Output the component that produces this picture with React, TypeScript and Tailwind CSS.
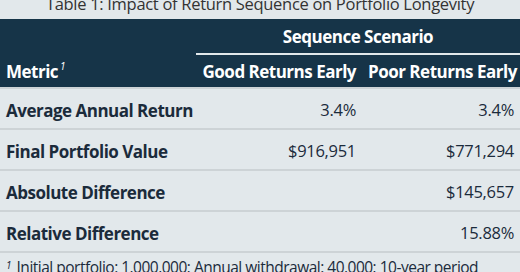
export default function App() {
  const rows = [
    { m: "Average Annual Return", a: "3.4%", b: "3.4%" },
    { m: "Final Portfolio Value", a: "$916,951", b: "$771,294" },
    { m: "Absolute Difference", a: "", b: "$145,657" },
    { m: "Relative Difference", a: "", b: "15.88%" },
  ];
  return (
    <div
      className="w-[520px] h-[272px] overflow-hidden bg-[#e2e8eb] text-[#1b2b3b]"
      style={{ fontFamily: '"Open Sans", "Noto Sans", sans-serif' }}
    >
      <div className="h-[19px] relative">
        <div className="absolute left-0 right-0 top-[-8px] text-center text-[16.5px] leading-[24px] tracking-[-0.3px] text-[#333] whitespace-nowrap">
          Table 1: Impact of Return Sequence on Portfolio Longevity
        </div>
      </div>
      <table className="w-[520px] table-fixed border-collapse">
        <colgroup>
          <col className="w-[196px]" />
          <col className="w-[166px]" />
          <col className="w-[158px]" />
        </colgroup>
        <thead className="bg-[#163448] text-white">
          <tr className="h-[35px]">
            <th rowSpan={2} className="text-left align-bottom px-[6px] pb-[3px] text-[17px] tracking-[-0.5px] font-bold whitespace-nowrap">
              Metric<sup className="italic font-normal text-[10px] ml-[2px] relative top-[-8px]">1</sup>
            </th>
            <th colSpan={2} className="text-center align-middle px-[6px] pt-[1px] text-[17px] tracking-[-0.5px] font-bold border-b-2 border-[#e2e8eb] whitespace-nowrap">
              Sequence Scenario
            </th>
          </tr>
          <tr className="h-[34px]">
            <th className="text-right px-[6px] pt-[1px] text-[17px] tracking-[-0.5px] font-bold whitespace-nowrap">Good Returns Early</th>
            <th className="text-right px-[6px] pt-[1px] text-[17px] tracking-[-0.5px] font-bold whitespace-nowrap">Poor Returns Early</th>
          </tr>
        </thead>
        <tbody>
          {rows.map((r, i) => (
            <tr key={i} className="h-[41px] border-t-2 border-[#cdd3d6]">
              <td className="px-[6px] pt-[4px] text-[17px] tracking-[-0.5px] font-bold whitespace-nowrap">{r.m}</td>
              <td className="px-[6px] pt-[4px] text-right text-[16.5px] tracking-[-0.3px]">{r.a}</td>
              <td className="px-[6px] pt-[4px] text-right text-[16.5px] tracking-[-0.3px]">{r.b}</td>
            </tr>
          ))}
          <tr className="border-t-2 border-[#cdd3d6]">
            <td colSpan={3} className="px-[6px] pt-[3px] text-[15.5px] tracking-[-0.5px] whitespace-nowrap">
              <sup className="italic text-[10px] relative top-[-4px] mr-[2px]">1</sup> Initial portfolio: 1,000,000; Annual withdrawal: 40,000; 10-year period
            </td>
          </tr>
        </tbody>
      </table>
    </div>
  );
}
